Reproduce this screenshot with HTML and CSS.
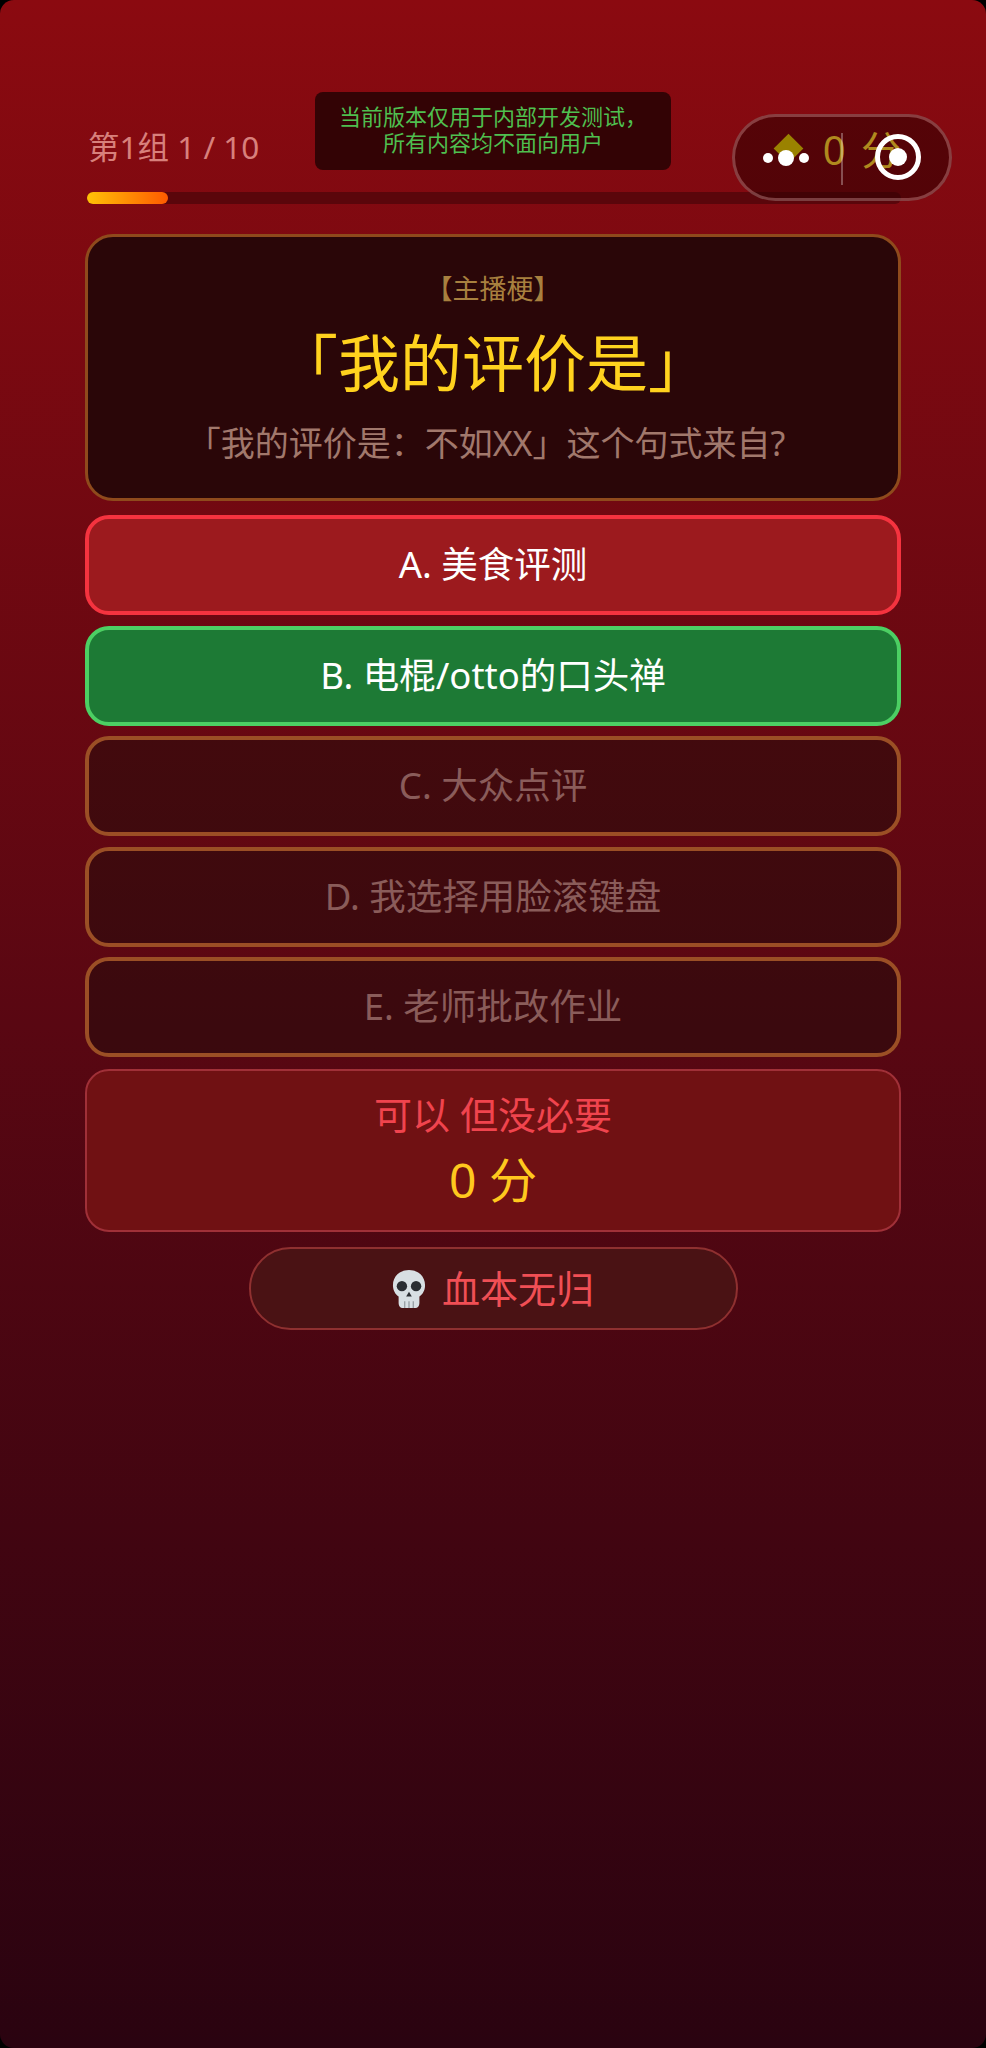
FILE: index.html
```html
<!DOCTYPE html>
<html>
  <head>
    <meta charset="utf-8" />
    <meta name="viewport" content="width=device-width, initial-scale=1.0" />
    <title>答题</title>
    <link rel="stylesheet" href="styles.css">
  </head>
  <body>
    <div class="page">
      <div class="quiz-header">
        <span class="quiz-progress">第1组 1 / 10</span>
        <span class="quiz-score">
          <span class="score-diamond"></span>
          <span>0 分</span>
        </span>
      </div>
      <div class="progress-track">
        <div class="progress-fill"></div>
      </div>

      <div class="question-card">
        <div class="question-category">【主播梗】</div>
        <div class="question-title">「我的评价是」</div>
        <div class="question-text">「我的评价是：不如XX」这个句式来自?</div>
      </div>

      <div class="option option-wrong">A. 美食评测</div>
      <div class="option option-right">B. 电棍/otto的口头禅</div>
      <div class="option option-idle">C. 大众点评</div>
      <div class="option option-idle">D. 我选择用脸滚键盘</div>
      <div class="option option-idle">E. 老师批改作业</div>

      <div class="result-card">
        <div class="result-text">可以 但没必要</div>
        <div class="result-score">0 分</div>
      </div>

      <div class="next-button">
        <svg class="skull" viewBox="0 0 36 40" width="34" height="38">
          <path d="M18 0C8 0 1 7 1 16c0 6 3 10 6 12v7c0 3 2 5 4 5h14c2 0 4-2 4-5v-7c3-2 6-6 6-12C35 7 28 0 18 0z" fill="#d8dfe3" />
          <circle cx="10.5" cy="17" r="5.5" fill="#2b2e33" />
          <circle cx="25.5" cy="17" r="5.5" fill="#2b2e33" />
          <path d="M18 23l3 5h-6z" fill="#2b2e33" />
          <path d="M13.5 33v7M18 33v7M22.5 33v7" stroke="#8d9499" stroke-width="1.2" />
        </svg>
        <span>血本无归</span>
      </div>
    </div>

    <!-- 开发版提示和小程序胶囊，盖在页面上 -->
    <div class="dev-tip">当前版本仅用于内部开发测试，<br />所有内容均不面向用户</div>
    <div class="capsule">
      <svg class="capsule-more" viewBox="0 0 46 18" width="46" height="18">
        <circle cx="5" cy="9" r="5" fill="#fff" />
        <circle cx="23" cy="9" r="8" fill="#fff" />
        <circle cx="41" cy="9" r="5" fill="#fff" />
      </svg>
      <span class="capsule-line"></span>
      <svg class="capsule-close" viewBox="0 0 46 46" width="46" height="46">
        <circle cx="23" cy="23" r="20.5" fill="none" stroke="#fff" stroke-width="5" />
        <circle cx="23" cy="23" r="9" fill="#fff" />
      </svg>
    </div>
  </body>
</html>
```

FILE: styles.css
```css
html {
  margin: 0;
  height: 100%;
  background: #000;
}

body {
  position: relative;
  margin: 0;
  height: 2048px;
  border-radius: 14px;
  font-family: "Noto Sans", "Noto Sans CJK SC", sans-serif;
  background: linear-gradient(180deg, #8b0a10 0, #590712 50%, #2a0310 100%);
  overflow: hidden;
}

.page {
  padding: 124px 85px 0;
}

/* 顶部进度 */
.quiz-header {
  display: flex;
  justify-content: space-between;
  align-items: center;
  height: 48px;
  padding-left: 3px;
  margin-bottom: 20px;
}

.quiz-progress {
  font-size: 31.5px;
  color: #d8807c;
  padding-bottom: 6px;
}

.quiz-score {
  position: relative;
  z-index: 1;
  display: flex;
  align-items: center;
  gap: 24px;
  font-size: 40px;
  word-spacing: 5px;
  color: #b08a1e;
}

.score-diamond {
  width: 21px;
  height: 21px;
  background: #9a8200;
  transform: rotate(45deg);
}

.progress-track {
  height: 12px;
  border-radius: 6px;
  background: rgba(0, 0, 0, 0.3);
  margin-left: 2px;
}

.progress-fill {
  width: 81px;
  height: 100%;
  border-radius: 6px;
  background: linear-gradient(90deg, #ffc107, #ff5a00);
}

/* 题目卡片 */
.question-card {
  box-sizing: border-box;
  height: 267px;
  margin-top: 30px;
  padding-top: 33px;
  border: 3px solid #8f4a1c;
  border-radius: 28px;
  background: #2a0608;
  text-align: center;
}

.question-category {
  font-size: 27px;
  line-height: 38px;
  color: #a8803f;
}

.question-title {
  font-size: 62px;
  line-height: 90px;
  margin-top: 10px;
  color: #ffd21e;
}

.question-text {
  font-size: 34px;
  line-height: 44px;
  margin-top: 13px;
  padding-right: 14px;
  color: #a1786c;
}

/* 选项 */
.option {
  box-sizing: border-box;
  height: 100px;
  margin-top: 10.5px;
  padding-bottom: 5px;
  display: flex;
  justify-content: center;
  align-items: center;
  font-size: 36.5px;
  border-radius: 24px;
  border: 4px solid #9b4f25;
}

.option-wrong {
  margin-top: 14px;
  color: #fff;
  background: #9c1a1e;
  border-color: #f5333f;
}

.option-right {
  color: #fff;
  background: #1d7a35;
  border-color: #4ccf63;
}

.option-idle {
  color: #8a5c5a;
  background: rgba(30, 12, 10, 0.5);
}

/* 结果 */
.result-card {
  box-sizing: border-box;
  height: 163px;
  margin-top: 12px;
  padding-top: 17px;
  border: 2px solid #a03038;
  border-radius: 24px;
  background: #701113;
  text-align: center;
}

.result-text {
  font-size: 38px;
  line-height: 52px;
  color: #f0444e;
}

.result-score {
  font-size: 48px;
  line-height: 68px;
  margin-top: 6px;
  color: #ffc81e;
}

.next-button {
  box-sizing: border-box;
  width: 489px;
  height: 83px;
  margin: 15px auto 0;
  padding-bottom: 4px;
  display: flex;
  justify-content: center;
  align-items: center;
  gap: 16px;
  font-size: 38px;
  color: #f04f55;
  border: 2px solid #8f3030;
  border-radius: 42px;
  background: #4a1214;
}

.skull {
  flex-shrink: 0;
  margin-top: 4px;
}

/* 覆盖层 */
.dev-tip {
  position: absolute;
  left: 315px;
  top: 92px;
  box-sizing: border-box;
  width: 356px;
  height: 78px;
  padding-top: 13px;
  border-radius: 8px;
  background: #330305;
  color: #4fbf4f;
  font-family: "Liberation Sans", "Noto Sans CJK SC", sans-serif;
  font-size: 22px;
  line-height: 25.5px;
  text-align: center;
}

.capsule {
  position: absolute;
  left: 732px;
  top: 114px;
  box-sizing: border-box;
  width: 220px;
  height: 87px;
  border: 3px solid rgba(255, 200, 200, 0.3);
  border-radius: 44px;
  background: rgba(50, 0, 2, 0.58);
}

.capsule-more {
  position: absolute;
  z-index: 2;
  left: 28px;
  top: 32px;
}

.capsule-close {
  position: absolute;
  z-index: 2;
  left: 140px;
  top: 17px;
}

.capsule-line {
  position: absolute;
  z-index: 2;
  left: 106px;
  top: 16px;
  width: 2px;
  height: 52px;
  background: rgba(255, 255, 255, 0.3);
}
```
